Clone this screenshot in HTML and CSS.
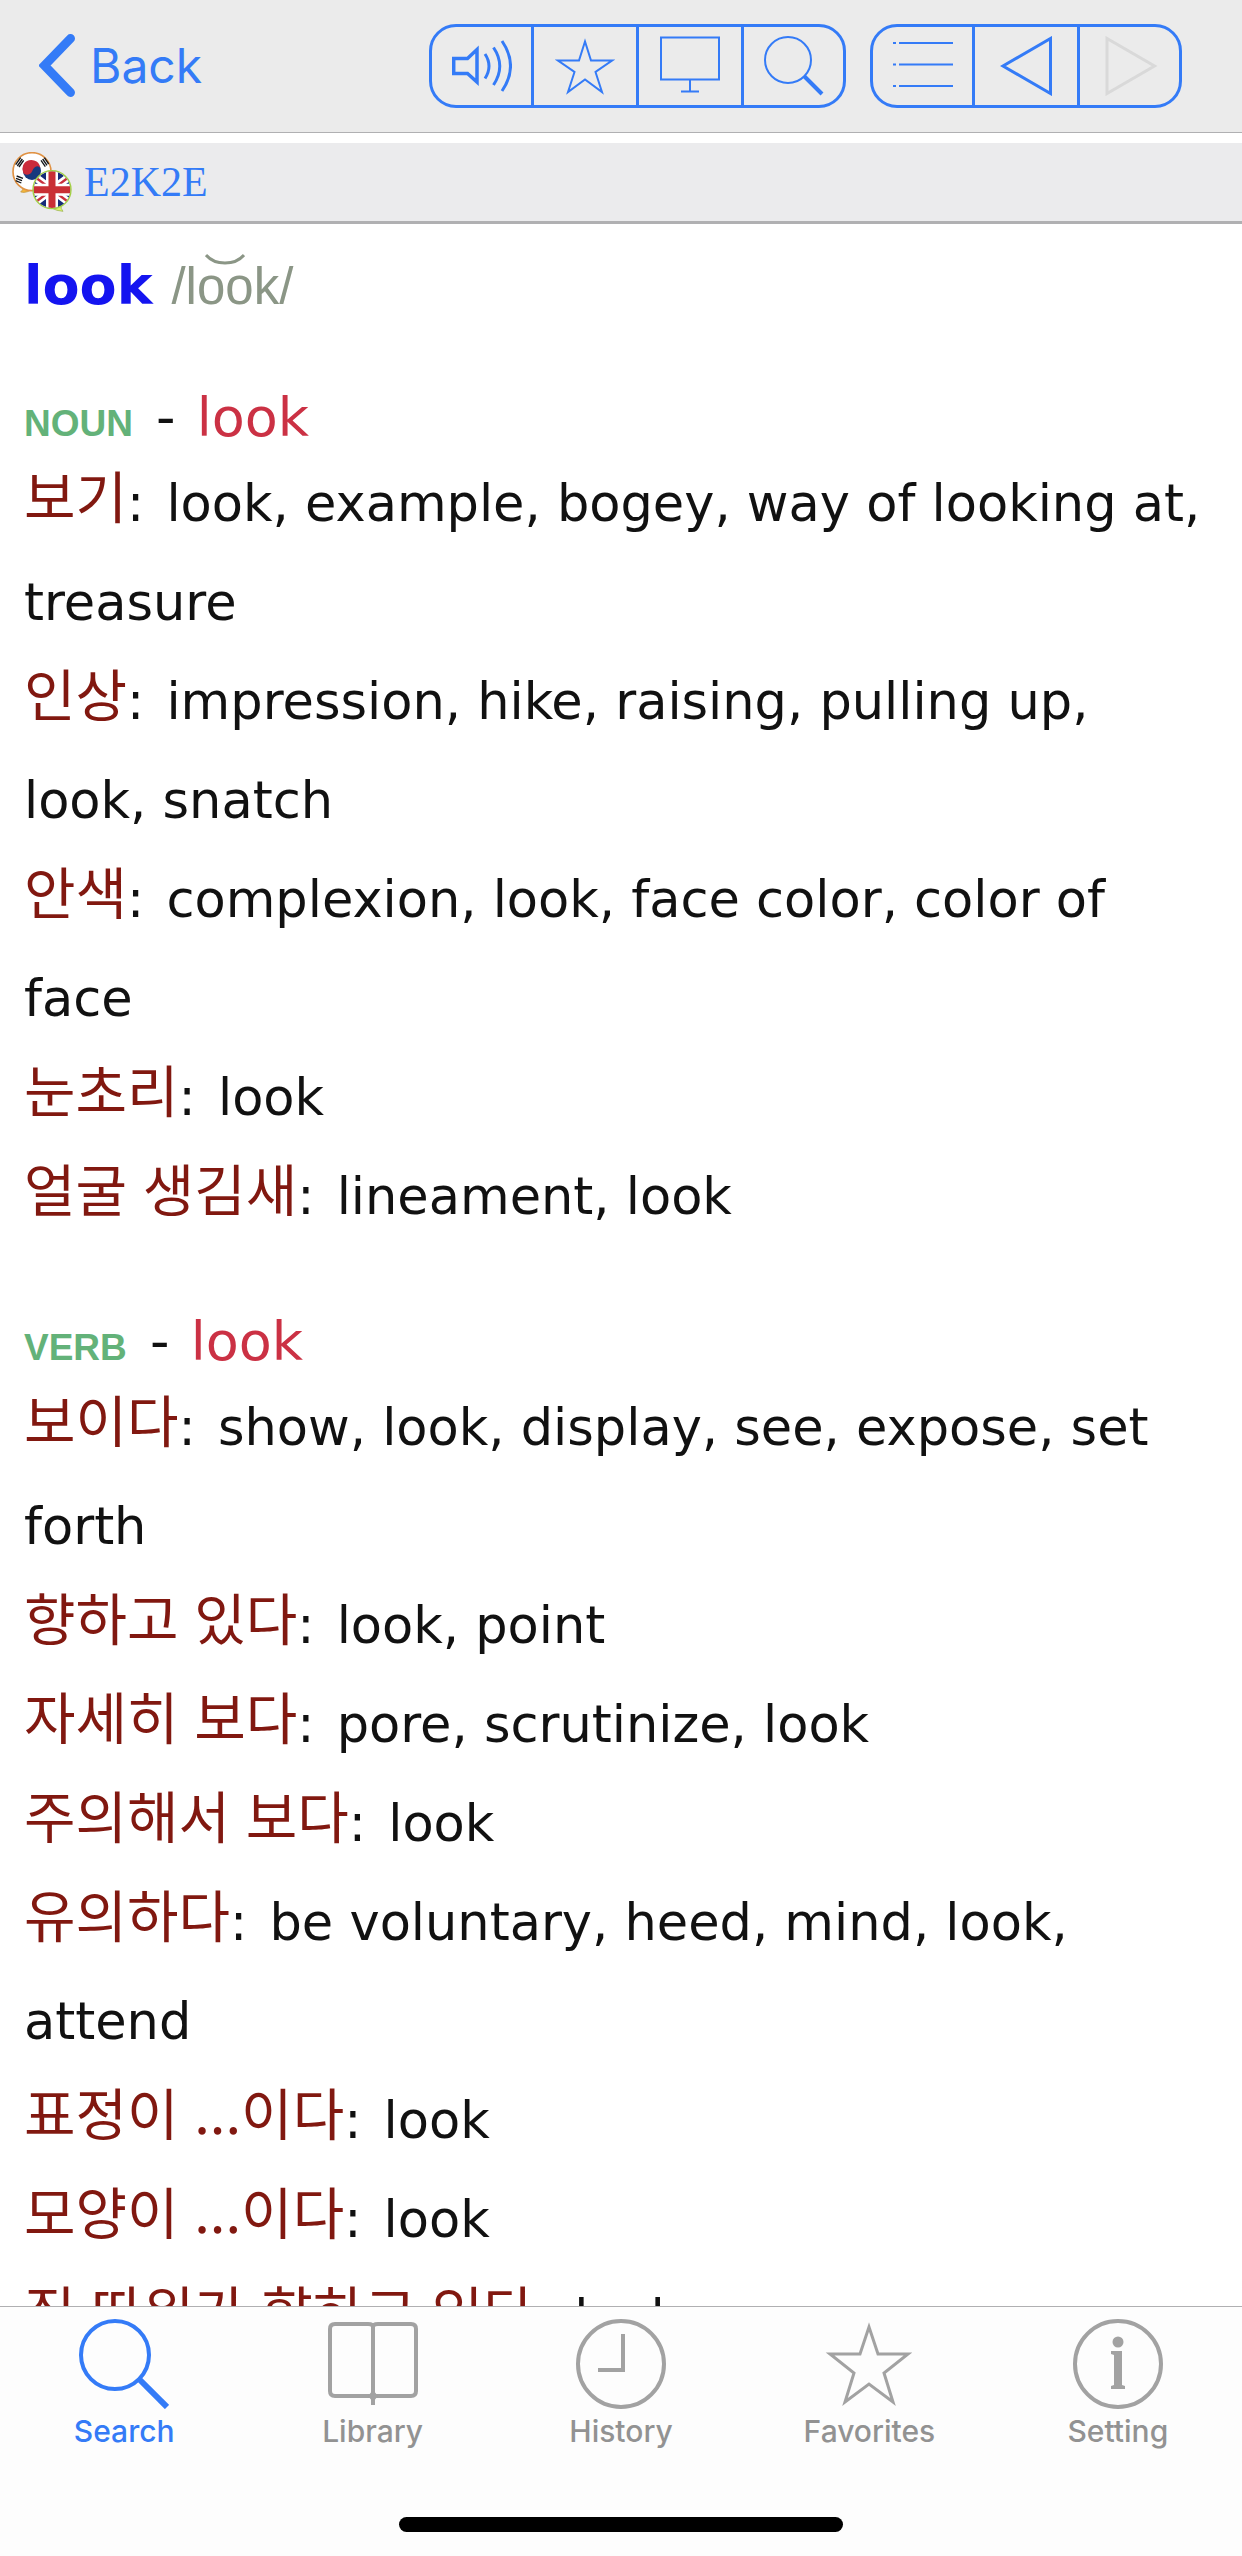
FILE: index.html
```html
<!DOCTYPE html>
<html lang="en">
<head>
<meta charset="utf-8">
<meta name="viewport" content="width=device-width">
<title>look</title>
<link rel="stylesheet" href="styles.css">
</head>
<body>
<header class="navbar">
  <button class="back" type="button">
    <svg class="chevron" viewBox="0 0 36 64" aria-hidden="true"><path d="M31.500 4.500 L5.500 31.500 L31.500 58.500"/></svg>
    <span>Back</span>
  </button>
  <div class="tools">
    <div class="segmented">
      <button type="button" aria-label="Speak"><svg class="icon" viewBox="0 0 60 60"><path stroke-width="3.500" d="M1.700 22.500H15.500L25 13.500V46L15.500 37.500H1.700Z"/><path stroke-width="3" d="M33 18Q41 30 33 42.500M41.500 11.500Q54 30 41.500 49M50 5Q67 30 50 55"/></svg></button>
      <button type="button" aria-label="Add to favorites"><svg class="icon" viewBox="0 0 60 60"><path d="M30 5.500L36 24.500H57L40.500 36L47 56L30 43.500L13 56L19.500 36L3 24.500H24Z"/></svg></button>
      <button type="button" aria-label="Display"><svg class="icon" viewBox="0 0 60 60"><path d="M1 1.500H59V43.500H1ZM30 43.500V55M21 55.500H39"/></svg></button>
      <button type="button" aria-label="Find"><svg class="icon" viewBox="0 0 60 60"><circle cx="24" cy="24" r="23"/><path stroke-width="4" d="M40.500 40.500L58 58"/></svg></button>
    </div>
    <div class="segmented">
      <button type="button" aria-label="Contents"><svg class="icon" viewBox="0 0 60 60"><path d="M0 7H3M6 7H60M0 28.500H3M6 28.500H60M0 50H3M6 50H60"/></svg></button>
      <button type="button" aria-label="Previous"><svg class="icon" viewBox="0 0 60 60"><path stroke-width="3" d="M54.500 2.500V57.500L7 30Z"/></svg></button>
      <button type="button" aria-label="Next" disabled><svg class="icon" viewBox="0 0 60 60"><path stroke-width="3" d="M7 2.500V57.500L54.500 30Z"/></svg></button>
    </div>
  </div>
</header>

<div class="dictionary">
  <svg class="flags" viewBox="36 74 180 180" aria-hidden="true">
    <defs><clipPath id="uk"><circle cx="156" cy="187" r="55"/></clipPath></defs>
    <path d="M66 180Q72 187 62 194Q82 199 100 182Z" fill="#f3b63c" stroke="#bd8c2e" stroke-width="2"/>
    <circle cx="96" cy="133" r="57" fill="#fff" stroke="#e09244" stroke-width="5"/>
    <circle cx="96" cy="131" r="27" fill="#18397d"/>
    <path d="M70 137A27 27 0 1 1 121 123C117 111 101 117 97 130C93 143 76 146 70 137Z" fill="#cb2b3b"/>
    <path d="M47 112L62 91M52 116L67 95M57 119L71 99M123 99L136 118M128 95L141 114M133 91L146 110M50 146L69 153M48 153L66 160M47 160L64 167" stroke="#15171b" stroke-width="4"/>
    <path d="M150 240Q172 252 189 252Q181 244 184 232Z" fill="#d8f36d" stroke="#96ae48" stroke-width="2"/>
    <g clip-path="url(#uk)">
      <path fill="#162c78" d="M96 127h120v120H96z"/>
      <path d="M96 142L216 232M216 142L96 232" stroke="#fff" stroke-width="23"/>
      <path d="M96 142L216 232M216 142L96 232" stroke="#c92f3c" stroke-width="7"/>
      <path d="M96 187H216M156 127V247" stroke="#fff" stroke-width="36"/>
      <path d="M96 187H216M156 127V247" stroke="#c92f34" stroke-width="21"/>
    </g>
    <circle cx="156" cy="187" r="57" fill="none" stroke="#a2cf43" stroke-width="4"/>
  </svg>
  <a href="#entry">E2K2E</a>
</div>

<main class="entry" id="entry">
  <h1>look <span class="pron">/l<span class="oo">oo<svg class="breve" viewBox="0 0 40 12" aria-hidden="true"><path d="M1 1Q8 9 20 9T39 1"/></svg></span>k/</span></h1>

  <section>
    <h2><span class="pos">NOUN</span> - <span class="sense">look</span></h2>
    <p><b lang="ko">보기</b><i>:</i> look, example, bogey, way of looking at, treasure</p>
    <p><b lang="ko">인상</b><i>:</i> impression, hike, raising, pulling up, look, snatch</p>
    <p><b lang="ko">안색</b><i>:</i> complexion, look, face color, color of face</p>
    <p><b lang="ko">눈초리</b><i>:</i> look</p>
    <p><b lang="ko">얼굴 생김새</b><i>:</i> lineament, look</p>
  </section>

  <section>
    <h2><span class="pos">VERB</span> - <span class="sense">look</span></h2>
    <p><b lang="ko">보이다</b><i>:</i> show, look, display, see, expose, set forth</p>
    <p><b lang="ko">향하고 있다</b><i>:</i> look, point</p>
    <p><b lang="ko">자세히 보다</b><i>:</i> pore, scrutinize, look</p>
    <p><b lang="ko">주의해서 보다</b><i>:</i> look</p>
    <p><b lang="ko">유의하다</b><i>:</i> be voluntary, heed, mind, look, attend</p>
    <p><b lang="ko">표정이 ...이다</b><i>:</i> look</p>
    <p><b lang="ko">모양이 ...이다</b><i>:</i> look</p>
    <p><b lang="ko">집 따위가 향하고 있다</b><i>:</i> look</p>
  </section>
</main>

<footer class="tabbar">
  <nav class="tabs">
    <a class="active" href="#search"><svg viewBox="0 0 90 90"><circle cx="36" cy="36" r="34"/><path stroke-width="6" d="M60.500 60.500L88 88"/></svg>Search</a>
    <a href="#library"><svg viewBox="0 0 90 90"><path d="M45 8Q45 5 40 5H7Q2 5 2 10V72Q2 77 7 77H83Q88 77 88 72V10Q88 5 83 5H50Q45 5 45 8V86"/><path class="solid" d="M45 71L50 77L45 83L40 77Z"/></svg>Library</a>
    <a href="#history"><svg viewBox="0 0 90 90"><circle cx="45" cy="45" r="43"/><path d="M47 15V51H22"/></svg>History</a>
    <a href="#favorites"><svg viewBox="0 0 90 90"><path stroke-width="3" d="M45 8L54 35H84L60 54L69 83L45 65L21 83L30 54L6 35H36Z"/></svg>Favorites</a>
    <a href="#setting"><svg viewBox="0 0 90 90"><circle cx="45" cy="45" r="43"/><circle class="solid" cx="45" cy="23" r="5.500"/><path class="solid" d="M38 32H49V66L52 67V70H38V67L41 66V36L38 35Z"/></svg>Setting</a>
  </nav>
  <div class="home-indicator"></div>
</footer>
</body>
</html>
```
FILE: styles.css
```css
* { box-sizing: border-box; }

:root {
  --blue: #347bf7;
  --line: #b0b0b2;
}

body {
  margin: 0;
  height: 100vh;
  display: flex;
  flex-direction: column;
  background: #fff;
  color: #111;
  font-family: "DejaVu Sans", "Noto Sans CJK KR", sans-serif;
}

svg { display: block; }

button {
  margin: 0;
  padding: 0;
  border: 0;
  background: none;
  color: inherit;
  font: inherit;
}

a { color: inherit; text-decoration: none; }

/* Top bar */
.navbar {
  flex: none;
  display: flex;
  align-items: center;
  justify-content: space-between;
  padding: 24px 60px 24px 39px;
  background: #ebebeb;
  border-bottom: 1px solid var(--line);
  color: var(--blue);
}

.back {
  display: flex;
  align-items: center;
  gap: 15px;
  font: 48px/60px Inter, sans-serif;
}

.chevron {
  width: 36px;
  height: 64px;
  fill: none;
  stroke: currentColor;
  stroke-width: 9;
  stroke-linecap: round;
}

.tools { display: flex; gap: 24px; }

.segmented {
  display: flex;
  height: 84px;
  border: 3px solid var(--blue);
  border-radius: 27px;
}

.segmented button {
  width: 105px;
  display: flex;
  align-items: center;
  justify-content: center;
  border-left: 3px solid var(--blue);
}

.segmented button:first-child { width: 99px; border-left: 0; }
.segmented button:last-child { width: 102px; }
.segmented button:disabled .icon { color: #d9d9d9; }

.icon {
  width: 60px;
  height: 60px;
  fill: none;
  stroke: currentColor;
  stroke-width: 2;
}

/* Dictionary title */
.dictionary {
  flex: none;
  display: flex;
  align-items: center;
  gap: 12px;
  margin-top: 10px;
  padding: 9px 12px;
  background: #ebebed;
  border-bottom: 3px solid var(--line);
  color: var(--blue);
  font: 42px/60px "Liberation Serif", serif;
}

.flags { width: 60px; height: 60px; }

/* Entry */
.entry {
  flex: 1;
  min-height: 0;
  overflow: hidden;
  padding: 26px 24px 0;
}

h1, h2 {
  margin: 0;
  font-size: 54px;
  line-height: 72px;
}

h1 { color: #1414f0; }
h2 { font-weight: 400; }
section { margin-top: 60px; }

.pron {
  color: #8b9686;
  font: 51px/60px "Liberation Sans", sans-serif;
}

.oo { position: relative; }

/* Tie drawn over the two vowels */
.breve {
  position: absolute;
  left: 50%;
  top: -4px;
  width: 40px;
  height: 12px;
  margin-left: -20px;
  fill: none;
  stroke: currentColor;
  stroke-width: 3;
}

.pos {
  margin-right: 6px;
  color: #63b279;
  font: bold 37px/48px "Liberation Sans", sans-serif;
}

.sense { margin-left: 4px; color: #cb3144; }

p {
  margin: 0;
  font-size: 51px;
  line-height: 99px;
}

p b {
  color: #811810;
  font: 56px/57px "Noto Sans CJK KR", sans-serif;
  vertical-align: 3px;
}

p i { margin-right: 6px; font-style: normal; }

/* Bottom tabs */
.tabbar {
  flex: none;
  background: #fdfdfd;
  border-top: 1px solid var(--line);
  padding: 12px 0 24px;
}

.tabs { display: flex; color: #929292; }

.tabs a {
  flex: 1;
  display: flex;
  flex-direction: column;
  align-items: center;
  gap: 4px;
  font: 500 30px/36px Inter, sans-serif;
}

.tabs .active, .tabs .active svg { color: var(--blue); }

.tabs svg {
  width: 90px;
  height: 90px;
  color: #a2a2a2;
  fill: none;
  stroke: currentColor;
  stroke-width: 4;
}

.tabs .solid { fill: currentColor; stroke: none; }

.home-indicator {
  width: 444px;
  height: 15px;
  margin: 68px auto 0;
  border-radius: 8px;
  background: #000;
}
```
